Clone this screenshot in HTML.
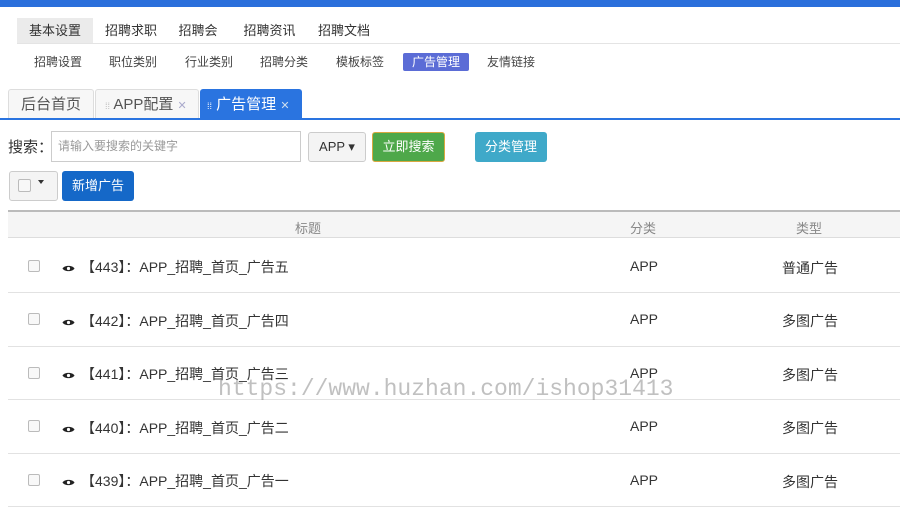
<!DOCTYPE html>
<html><head><meta charset="utf-8"><style>
*{margin:0;padding:0;box-sizing:border-box}
body{width:900px;height:515px;overflow:hidden;background:#fff;font-family:"Liberation Sans","Noto Sans CJK SC",sans-serif;font-size:13px;color:#333;position:relative}
.a{position:absolute}
.top{left:0;top:0;width:900px;height:7px;background:#2a6fdb}
.m1{top:18px;height:25px;line-height:25px;font-size:13px;color:#333;text-align:center}
.m2{top:53px;height:18px;line-height:18px;font-size:12px;color:#444;text-align:center}
.tab{top:89px;height:29px;line-height:29px;border:1px solid #ddd;border-bottom:none;background:#f7f7f7;font-size:15px;color:#555;border-radius:3px 3px 0 0}
.btn{border-radius:3px;text-align:center;font-size:13px;color:#fff}
.row{left:8px;width:892px;height:1px;background:#e2e2e2}
.cb{width:12px;height:12px;border:1px solid #bbb;border-radius:2px;background:#f8f8f8}
.t{font-size:14px;color:#333}
.eye{display:inline-block;vertical-align:middle;margin-right:6px}
</style></head><body>
<div class="a top"></div>
<div class="a" style="left:17px;top:43px;width:883px;height:1px;background:#e4e4e4"></div>
<div class="a m1" style="left:17px;width:76px;background:#ebebeb">基本设置</div>
<div class="a m1" style="left:96px;width:70px">招聘求职</div>
<div class="a m1" style="left:168px;width:60px">招聘会</div>
<div class="a m1" style="left:232px;width:75px">招聘资讯</div>
<div class="a m1" style="left:306px;width:76px">招聘文档</div>
<div class="a m2" style="left:26px;width:64px">招聘设置</div>
<div class="a m2" style="left:101px;width:64px">职位类别</div>
<div class="a m2" style="left:177px;width:64px">行业类别</div>
<div class="a m2" style="left:252px;width:64px">招聘分类</div>
<div class="a m2" style="left:328px;width:64px">模板标签</div>
<div class="a m2" style="left:403px;width:66px;background:#5b6cd6;color:#fff;border-radius:2px">广告管理</div>
<div class="a m2" style="left:479px;width:64px">友情链接</div>
<div class="a tab" style="left:8px;width:86px;text-align:center">后台首页</div>
<div class="a tab" style="left:95px;width:104px;padding-left:9px"><span style="font-size:9px;color:#bbb">⁞⁞</span> APP配置 <span style="font-size:11px;color:#aac">✕</span></div>
<div class="a tab" style="left:200px;width:102px;padding-left:6px;background:#2a74e0;border-color:#2a74e0;color:#fff"><span style="font-size:9px">⁞⁞</span> 广告管理 <span style="font-size:11px;color:#cde">✕</span></div>
<div class="a" style="left:0;top:118px;width:900px;height:2px;background:#2a74e0"></div>
<div class="a" style="left:8px;top:136px;font-size:15px">搜索：</div>
<div class="a" style="left:51px;top:131px;width:250px;height:31px;border:1px solid #ccc;line-height:29px;padding-left:6px;font-size:12px;color:#999">请输入要搜索的关键字</div>
<div class="a btn" style="left:308px;top:132px;width:58px;height:30px;line-height:28px;background:#f4f4f4;border:1px solid #ccc;color:#333">APP ▾</div>
<div class="a btn" style="left:372px;top:132px;width:73px;height:30px;line-height:28px;background:#4ea84a;border:1px solid #d8a840">立即搜索</div>
<div class="a btn" style="left:475px;top:132px;width:72px;height:30px;line-height:30px;background:#3fa9c9">分类管理</div>
<div class="a btn" style="left:9px;top:171px;width:49px;height:30px;background:#f4f4f4;border:1px solid #ccc"></div>
<div class="a cb" style="left:18px;top:179px;width:13px;height:13px"></div>
<div class="a" style="left:38px;top:180px;width:0;height:0;border-left:3.5px solid transparent;border-right:3.5px solid transparent;border-top:4px solid #333"></div>
<div class="a btn" style="left:62px;top:171px;width:72px;height:30px;line-height:30px;background:#1568c8">新增广告</div>
<div class="a" style="left:8px;top:210px;width:892px;height:2px;background:#bbb"></div>
<div class="a" style="left:8px;top:212px;width:892px;height:26px;background:#f5f5f5;border-bottom:1px solid #ddd"></div>
<div class="a" style="left:295px;top:218px;color:#888">标题</div>
<div class="a" style="left:630px;top:218px;color:#888">分类</div>
<div class="a" style="left:796px;top:218px;color:#888">类型</div>

<div class="a cb" style="left:28px;top:260px"></div><div class="a t" style="left:62px;top:257px"><svg class="eye" width="13" height="9" viewBox="0 0 13 9"><path d="M0.5 4.5C2.5 1 10.5 1 12.5 4.5C10.5 8 2.5 8 0.5 4.5Z" fill="#222"/><circle cx="6.5" cy="4.5" r="1.6" fill="#fff"/></svg>【443】：APP_招聘_首页_广告五</div><div class="a t" style="left:630px;top:258px">APP</div><div class="a t" style="left:782px;top:258px">普通广告</div>
<div class="a row" style="top:292px"></div>
<div class="a cb" style="left:28px;top:313px"></div><div class="a t" style="left:62px;top:311px"><svg class="eye" width="13" height="9" viewBox="0 0 13 9"><path d="M0.5 4.5C2.5 1 10.5 1 12.5 4.5C10.5 8 2.5 8 0.5 4.5Z" fill="#222"/><circle cx="6.5" cy="4.5" r="1.6" fill="#fff"/></svg>【442】：APP_招聘_首页_广告四</div><div class="a t" style="left:630px;top:311px">APP</div><div class="a t" style="left:782px;top:311px">多图广告</div>
<div class="a row" style="top:346px"></div>
<div class="a cb" style="left:28px;top:367px"></div><div class="a t" style="left:62px;top:364px"><svg class="eye" width="13" height="9" viewBox="0 0 13 9"><path d="M0.5 4.5C2.5 1 10.5 1 12.5 4.5C10.5 8 2.5 8 0.5 4.5Z" fill="#222"/><circle cx="6.5" cy="4.5" r="1.6" fill="#fff"/></svg>【441】：APP_招聘_首页_广告三</div><div class="a t" style="left:630px;top:365px">APP</div><div class="a t" style="left:782px;top:365px">多图广告</div>
<div class="a row" style="top:399px"></div>
<div class="a cb" style="left:28px;top:420px"></div><div class="a t" style="left:62px;top:418px"><svg class="eye" width="13" height="9" viewBox="0 0 13 9"><path d="M0.5 4.5C2.5 1 10.5 1 12.5 4.5C10.5 8 2.5 8 0.5 4.5Z" fill="#222"/><circle cx="6.5" cy="4.5" r="1.6" fill="#fff"/></svg>【440】：APP_招聘_首页_广告二</div><div class="a t" style="left:630px;top:418px">APP</div><div class="a t" style="left:782px;top:418px">多图广告</div>
<div class="a row" style="top:453px"></div>
<div class="a cb" style="left:28px;top:474px"></div><div class="a t" style="left:62px;top:471px"><svg class="eye" width="13" height="9" viewBox="0 0 13 9"><path d="M0.5 4.5C2.5 1 10.5 1 12.5 4.5C10.5 8 2.5 8 0.5 4.5Z" fill="#222"/><circle cx="6.5" cy="4.5" r="1.6" fill="#fff"/></svg>【439】：APP_招聘_首页_广告一</div><div class="a t" style="left:630px;top:472px">APP</div><div class="a t" style="left:782px;top:472px">多图广告</div>
<div class="a row" style="top:506px"></div>
<div class="a" style="left:218px;top:376px;font-family:'Liberation Mono',monospace;font-size:23px;color:rgba(140,140,140,0.55)">https://www.huzhan.com/ishop31413</div>
</body></html>
